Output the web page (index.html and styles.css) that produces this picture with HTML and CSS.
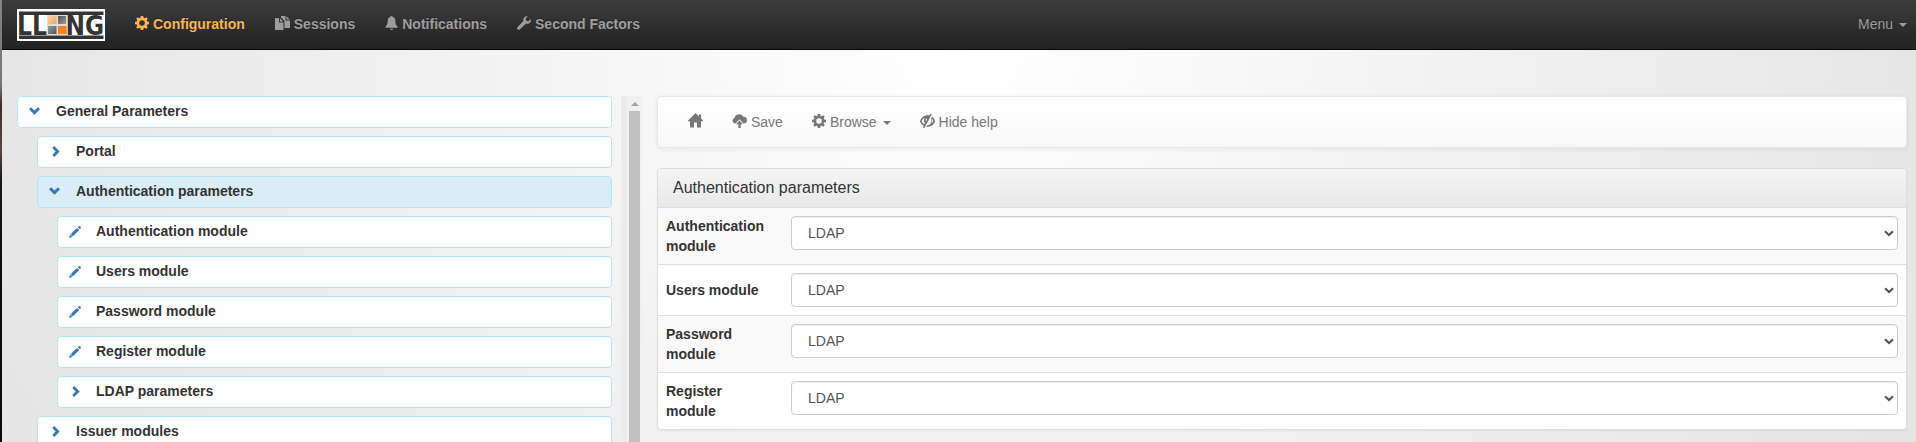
FILE: index.html
```
<!DOCTYPE html>
<html lang="en">
<head>
<meta charset="utf-8">
<title>LemonLDAP::NG Manager</title>
<link rel="stylesheet" href="styles.css">
</head>
<body>
<svg class="symbols" aria-hidden="true">
  <symbol id="cog" viewBox="0 0 14 14"><path fill-rule="evenodd" d="M5.8 0h2.4l.4 1.8 1.1.5L11.3 1.300 12.800 2.800 11.700 4.300l.5 1.100 1.800.4v2.400l-1.800.4-.5 1.100 1.100 1.500-1.500 1.500-1.600-1-1.100.5-.4 1.800H5.800l-.4-1.800-1.100-.5-1.600 1-1.500-1.500 1.100-1.500-.5-1.100L0 8.200V5.800l1.800-.4.500-1.100L1.200 2.800 2.700 1.300l1.600 1 1.100-.5zM7 4.200a2.800 2.800 0 1 0 0 5.600 2.800 2.800 0 0 0 0-5.600z"/></symbol>
  <symbol id="copy" viewBox="0 0 15 14"><path d="M0 2h4v4.500h4.500V14H0zM5 2.200l3.300 3.300H5z"/><path d="M6 0h4.500v4.500H15V12H9.500V5L6.500 1.800H6zM11.500.3L14.800 3.600H11.500z"/></symbol>
  <symbol id="bell" viewBox="0 0 13 14"><path d="M5.500.8a1 1 0 0 1 2 0C9.600 1.500 10.300 3 10.300 5c0 3 .9 4.300 2.100 5.200v1.500H.6v-1.500C1.800 9.300 2.700 8 2.700 5c0-2 .7-3.500 2.800-4.200zM5 12.800h3a1.500 1.200 0 0 1-3 0z"/></symbol>
  <symbol id="wrench" viewBox="0 0 14 14"><path d="M10.800.3L8.700 2.500l.4 2.300 2.300.4 2.200-2.100c.6 2-.1 3.700-1.600 4.400-1 .5-2.100.4-2.900.1L2.700 13.600c-.5.500-1.200.4-1.700 0l-.6-.6c-.5-.5-.5-1.200 0-1.700l6-6.400C5.700 2.500 7.500-.4 10.800.3z"/></symbol>
  <symbol id="home" viewBox="0 0 15 15"><path d="M7.500 0L11 3.500V1.500h2v4L15 7.600V8.300h-2v6.200H9V9.500H6v5H2V8.300H0V7.600z"/></symbol>
  <symbol id="upload" viewBox="0 0 15 14"><path d="M2.800 9.500A2.800 2.800 0 0 1 2.600 4 4.700 4.700 0 0 1 11.300 2.700 3.400 3.400 0 0 1 11.800 9.500H11.500L7.500 5.300 3.500 9.500z"/><path d="M7.500 6.500l3.500 3.800H8.700V14H6.300v-3.700H4z"/></symbol>
  <symbol id="eye-off" viewBox="0 0 15 14"><path fill-rule="evenodd" d="M9.400 1.400L10.300 0H12L4.300 14H2.700l1.100-2C1.900 11 .7 9.400 0 7.300.9 3.400 4.900.5 9.400 1.400zM1.700 7.200c.5 1.300 1.500 2.400 2.900 3.100l.4-.8C3.700 8 3.500 5.800 4.600 4 3.100 4.700 2 5.900 1.700 7.200zM6.200 4.500C5.500 5.500 5.500 6.500 6 7.400L7 5.600z"/><path d="M12.200 2.500C13.700 3.600 14.600 5.200 15 7.200c-.9 3.400-4 5.800-8.700 5.800l.9-1.700c1-.1 1.900-.4 2.700-.9 1.400-1.400 1.900-3.500 1.300-5.900zM11.700 9.200c.8-.6 1.300-1.300 1.500-2.100-.2-.9-.5-1.600-1.100-2.300.2 1.400.1 3-.4 4.400z"/></symbol>
  <symbol id="down" viewBox="0 0 11 8"><path d="M0 2.200L2.100.3 5.500 3.400 8.900.3 11 2.200 5.500 7.700z"/></symbol>
  <symbol id="right" viewBox="0 0 8 11"><path d="M2.200 0L7.700 5.500 2.200 11 .3 8.900 3.600 5.500.3 2.100z"/></symbol>
  <symbol id="pencil" viewBox="0 0 12 12"><path d="M9.500.5c.6-.6 1.200-.6 1.900.1s.7 1.300.1 1.900l-.7.700-2-2zM8.100 1.900l2.100 2.100-6.200 6.300-2.300-2.200zM1.200 8.600l2.300 2.200L0 12z"/></symbol>
  <symbol id="select-arrow" viewBox="0 0 10 7"><path d="M1 1.300l4 3.700 4-3.700" fill="none" stroke="currentColor" stroke-width="2.100"/></symbol>
</svg>
<header class="navbar">
  <svg class="logo" viewBox="0 0 88 32" role="img" aria-label="LL::NG">
    <defs>
      <linearGradient id="peach" x2="1" y2="1"><stop stop-color="#fbd3ae"/><stop offset="1" stop-color="#f7a45c"/></linearGradient>
      <linearGradient id="grey" x2="1" y2="1"><stop stop-color="#555"/><stop offset="1" stop-color="#999"/></linearGradient>
      <linearGradient id="grey-light" x2="1" y2="1"><stop stop-color="#999"/><stop offset="1" stop-color="#555"/></linearGradient>
    </defs>
    <path fill="#fff" d="M0 0h88v32H0z"/><path fill="#343436" d="M2 2.500h84.500v3.500H2zM2 26.500h84.500V30H2z"/>
    <text class="logo-text" x="0" y="25.500" textLength="30" lengthAdjust="spacingAndGlyphs">LL</text>
    <text class="logo-text" x="48.500" y="25.500" textLength="38.500" lengthAdjust="spacingAndGlyphs">NG</text>
    <path fill="#ddd" d="M30 6h20v20H30z"/>
    <path fill="url(#peach)" d="M31 7h8.500v8H31z"/><path fill="url(#grey)" d="M41 7h8v8h-8z"/><path fill="url(#grey-light)" d="M31 17h8.500v8H31z"/><path fill="#f58220" d="M41 17h8.500v8H41z"/>
  </svg>
  <nav class="nav">
    <a class="nav-link active"><svg class="i14"><use href="#cog"/></svg>Configuration</a>
    <a class="nav-link"><svg class="i15"><use href="#copy"/></svg>Sessions</a>
    <a class="nav-link"><svg class="i13"><use href="#bell"/></svg>Notifications</a>
    <a class="nav-link"><svg class="i14"><use href="#wrench"/></svg>Second Factors</a>
  </nav>
  <a class="menu">Menu<span class="caret"></span></a>
</header>
<main class="content">
  <aside class="sidebar">
    <div class="tree">
      <div class="node"><svg class="down"><use href="#down"/></svg>General Parameters</div>
      <div class="node level-2"><svg class="right"><use href="#right"/></svg>Portal</div>
      <div class="node level-2 selected"><svg class="down"><use href="#down"/></svg>Authentication parameters</div>
      <div class="node level-3"><svg class="pencil"><use href="#pencil"/></svg>Authentication module</div>
      <div class="node level-3"><svg class="pencil"><use href="#pencil"/></svg>Users module</div>
      <div class="node level-3"><svg class="pencil"><use href="#pencil"/></svg>Password module</div>
      <div class="node level-3"><svg class="pencil"><use href="#pencil"/></svg>Register module</div>
      <div class="node level-3"><svg class="right"><use href="#right"/></svg>LDAP parameters</div>
      <div class="node level-2"><svg class="right"><use href="#right"/></svg>Issuer modules</div>
    </div>
    <div class="scrollbar"><span class="scroll-up"></span><span class="thumb"></span></div>
  </aside>
  <section class="detail">
    <div class="toolbar">
      <a class="tool"><svg class="home"><use href="#home"/></svg></a>
      <a class="tool"><svg class="i15"><use href="#upload"/></svg>Save</a>
      <a class="tool"><svg class="i14"><use href="#cog"/></svg>Browse<span class="caret"></span></a>
      <a class="tool"><svg class="i15"><use href="#eye-off"/></svg>Hide help</a>
    </div>
    <div class="panel">
      <h3 class="panel-title">Authentication parameters</h3>
      <div class="row striped"><label class="label">Authentication module</label><div class="select">LDAP<svg class="select-arrow"><use href="#select-arrow"/></svg></div></div>
      <div class="row short"><label class="label">Users module</label><div class="select">LDAP<svg class="select-arrow"><use href="#select-arrow"/></svg></div></div>
      <div class="row striped"><label class="label">Password module</label><div class="select">LDAP<svg class="select-arrow"><use href="#select-arrow"/></svg></div></div>
      <div class="row"><label class="label">Register module</label><div class="select">LDAP<svg class="select-arrow"><use href="#select-arrow"/></svg></div></div>
    </div>
  </section>
</main>
</body>
</html>
```

FILE: styles.css
```
* { box-sizing: border-box; }
body {
  margin: 0;
  height: 442px;
  overflow: hidden;
  border-left: 2px solid;
  border-image: linear-gradient(#858580 0, #77776f 85px, #402b26 105px, #5b453e 150px, #1b1715 180px, #0c0d13 260px, #080910 442px) 0 0 0 1;
  background: radial-gradient(ellipse 960px 780px at 50% 50px, #fff 0%, #e6e6e6 100%, #dcdcdc 200%);
  color: #333;
  font: 14px/20px "Liberation Sans", Arial, sans-serif;
}
svg { display: block; flex: none; fill: currentColor; }
.symbols { position: absolute; width: 0; height: 0; }
.navbar {
  display: flex;
  height: 50px;
  padding: 9px 9px 0 15px;
  border-bottom: 1px solid #080808;
  background: linear-gradient(#3c3c3c, #222);
  color: #9d9d9d;
  text-shadow: 0 -1px 0 rgba(0, 0, 0, .25);
}
.logo { width: 88px; height: 32px; }
.logo-text { font: bold 26px "DejaVu Sans", sans-serif; fill: #343436; text-shadow: none; }
.nav { display: flex; gap: 30px; margin: 5px 0 0 30px; font-weight: bold; }
.nav-link { display: flex; gap: 4px; height: 20px; }
.nav-link svg { margin-top: 2px; }
.active { color: #fbb450; }
.i13 { width: 13px; height: 14px; }
.i14 { width: 14px; height: 14px; }
.i15 { width: 15px; height: 14px; }
.menu { display: flex; margin: 5px 0 0 auto; }
.caret {
  width: 8px;
  height: 4px;
  margin: 9px 0 0 6px;
  border: 4px solid transparent;
  border-top-color: currentColor;
  border-bottom: 0;
}
.content { display: flex; padding: 46px 9px 0 15px; }
.sidebar { display: flex; gap: 9px; width: 625px; height: 346px; overflow: hidden; }
.tree { display: flex; flex-direction: column; gap: 8px; width: 595px; }
.node {
  display: flex;
  flex: none;
  align-items: center;
  height: 32px;
  padding: 0 0 2px 11px;
  border: 1px solid #b5e7f0;
  border-radius: 4px;
  background: #fff;
  font-weight: bold;
}
.level-2 { margin-left: 20px; }
.level-3 { margin-left: 40px; }
.selected { background: #d9edf7; }
.node svg { color: #337ab7; }
.down { width: 11px; height: 8px; margin: 0 16px 1px 0; }
.right { width: 8px; height: 11px; margin: 1px 16px 0 3px; }
.pencil { width: 12px; height: 12px; margin: 1px 15px 0 0; }
.scrollbar {
  display: flex;
  flex-direction: column;
  width: 21px;
  padding: 6px 2px 0 8px;
  background: linear-gradient(90deg, #ececec 6px, #f1f1f1 6px);
}
.scroll-up { width: 8px; height: 4px; margin: 0 0 5px 2px; border: 4px solid transparent; border-top: 0; border-bottom-color: #a3a3a3; }
.thumb { flex: 1; width: 11px; background: #c1c1c1; }
.detail { display: flex; flex: 1; flex-direction: column; gap: 20px; margin-left: 15px; }
.toolbar {
  display: flex;
  height: 52px;
  padding: 15px 30px;
  border: 1px solid #e7e7e7;
  border-radius: 4px;
  background: linear-gradient(#fff, #f8f8f8);
  box-shadow: inset 0 1px 0 rgba(255, 255, 255, .15), 0 1px 5px rgba(0, 0, 0, .075);
  color: #777;
}
.tool { display: flex; gap: 4px; margin-right: 29px; }
.tool svg { margin-top: 2px; }
.tool .home { width: 15px; height: 15px; margin-top: 1px; }
.tool .caret { margin-left: 2px; }
.panel {
  height: 262px;
  border: 1px solid #ddd;
  border-radius: 4px;
  background: #fff;
  box-shadow: 0 1px 2px rgba(0, 0, 0, .05);
  overflow: hidden;
}
.panel-title { height: 38px; margin: 0; padding: 9px 15px; background: linear-gradient(#f5f5f5, #e8e8e8); font-size: 16px; font-weight: normal; }
.row {
  display: flex;
  height: 57px;
  padding: 8px;
  border-top: 1px solid #ddd;
}
.striped { background: #f9f9f9; }
.short { height: 51px; }
.label { width: 125px; padding-right: 20px; font-weight: bold; }
.short .label { line-height: 34px; }
.select {
  display: flex;
  flex: 1;
  align-items: center;
  justify-content: space-between;
  height: 34px;
  padding: 0 3px 0 16px;
  border: 1px solid #ccc;
  border-radius: 4px;
  background: #fff;
  box-shadow: inset 0 1px 1px rgba(0, 0, 0, .075);
  color: #555;
}
.select-arrow { width: 10px; height: 7px; }
```
